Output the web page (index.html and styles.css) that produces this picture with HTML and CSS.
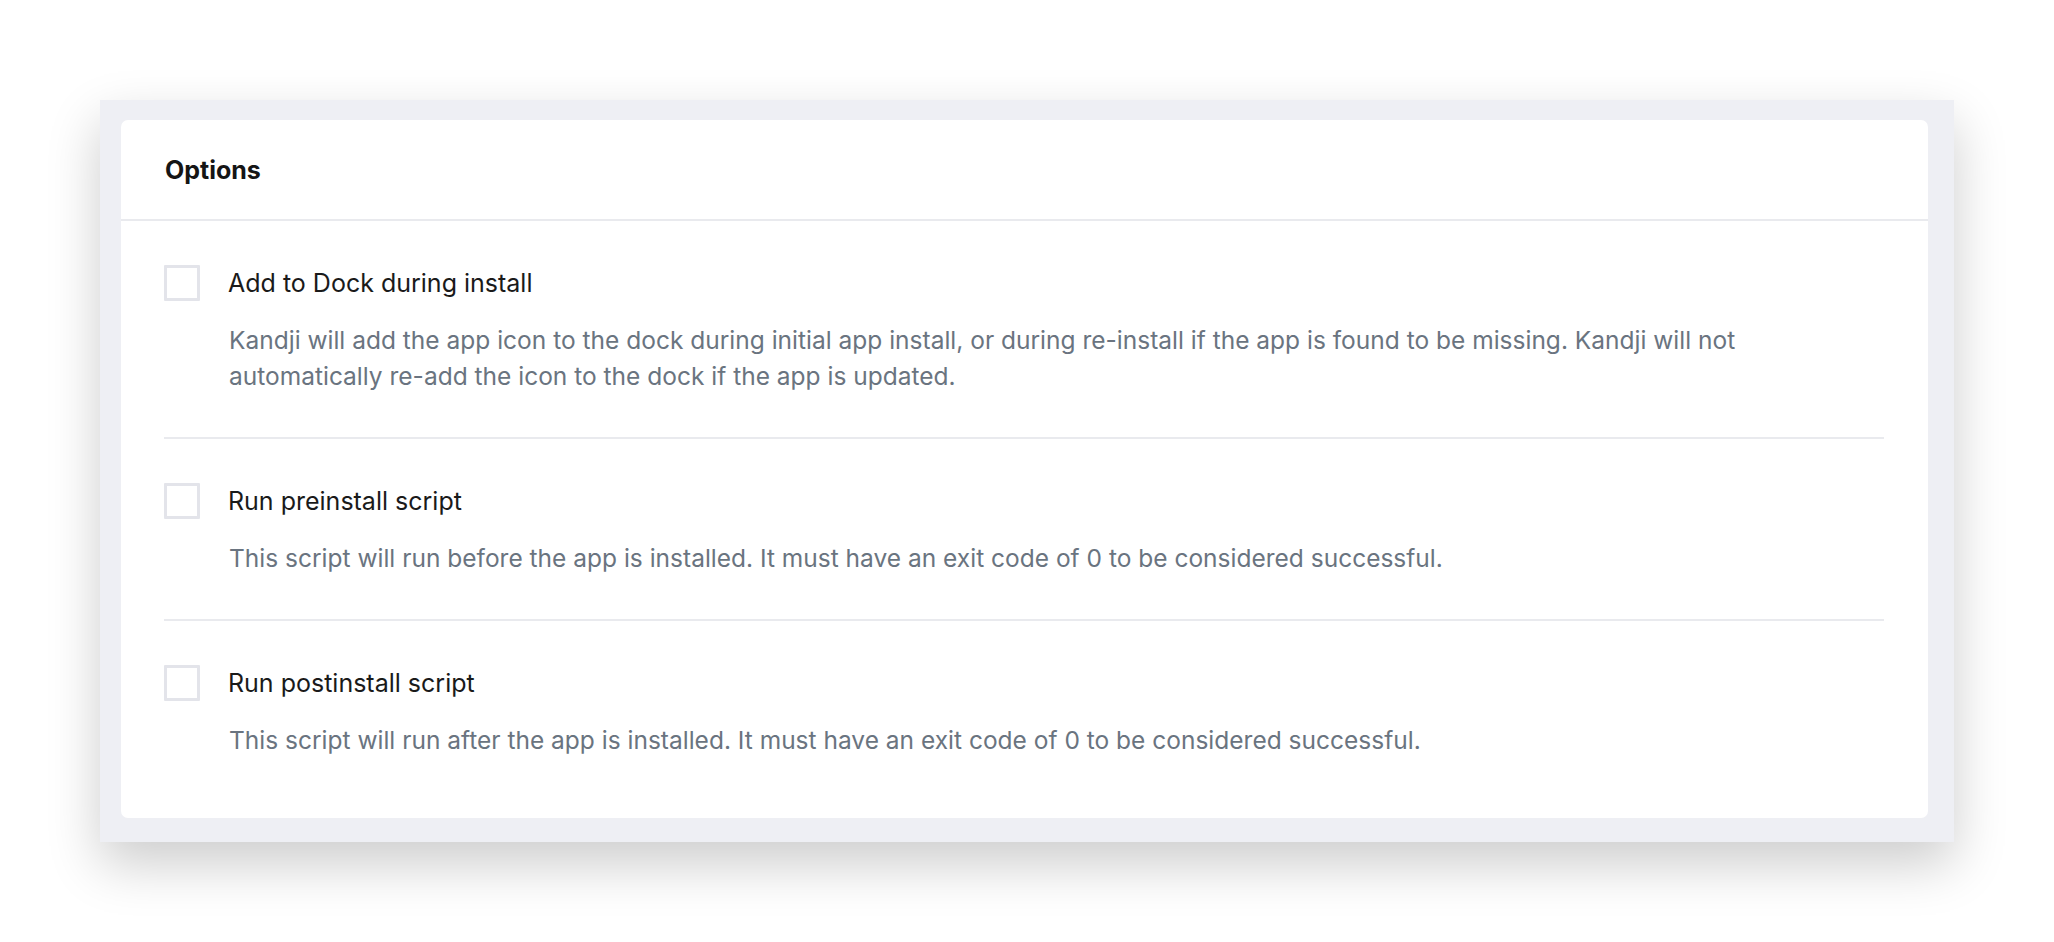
FILE: index.html
```html
<!DOCTYPE html>
<html lang="en">
<head>
<meta charset="utf-8">
<title>Options</title>
<link rel="stylesheet" href="styles.css">
</head>
<body>
  <div class="frame">
    <section class="card">
      <header class="card-header">
        <h2 class="card-title">Options</h2>
      </header>
      <div class="card-body">
        <div class="option">
          <div class="option-head">
            <span class="checkbox"></span>
            <span class="option-label">Add to Dock during install</span>
          </div>
          <p class="option-desc">Kandji will add the app icon to the dock during initial app install, or during re-install if the app is found to be missing. Kandji will not automatically re-add the icon to the dock if the app is updated.</p>
        </div>
        <div class="option">
          <div class="option-head">
            <span class="checkbox"></span>
            <span class="option-label">Run preinstall script</span>
          </div>
          <p class="option-desc">This script will run before the app is installed. It must have an exit code of 0 to be considered successful.</p>
        </div>
        <div class="option">
          <div class="option-head">
            <span class="checkbox"></span>
            <span class="option-label">Run postinstall script</span>
          </div>
          <p class="option-desc">This script will run after the app is installed. It must have an exit code of 0 to be considered successful.</p>
        </div>
      </div>
    </section>
  </div>
</body>
</html>
```
FILE: styles.css
```css
html, body {
  margin: 0;
  padding: 0;
  background: #ffffff;
}
body {
  font-family: Inter, "Noto Sans", "Liberation Sans", sans-serif;
  padding: 100px 100px 100px 100px;
}
.frame {
  width: 1854px;
  box-sizing: border-box;
  background: #eeeff4;
  padding: 20px 26px 24px 21px;
  box-shadow: 0 22px 50px rgba(0, 0, 0, 0.2);
}
.card {
  background: #ffffff;
  border-radius: 7px;
  padding-bottom: 17px;
}
.card-header {
  height: 101px;
  display: flex;
  align-items: center;
  padding: 0 44px 0 44px;
  box-sizing: border-box;
  border-bottom: 2px solid #e9eaee;
}
.card-title {
  margin: 0;
  font-size: 25px;
  font-weight: 700;
  color: #151515;
}
.card-body {
  padding: 0 44px 0 43px;
}
.option {
  padding: 44px 0 43px;
  border-bottom: 2px solid #e9eaee;
}
.option:last-child {
  border-bottom: none;
}
.option-head {
  display: flex;
  align-items: center;
  gap: 28px;
  height: 36px;
}
.checkbox {
  width: 36px;
  height: 36px;
  box-sizing: border-box;
  border: 3px solid #e3e4ea;
  border-radius: 1px;
  background: #ffffff;
  flex: none;
}
.option-label {
  font-size: 25px;
  line-height: 36px;
  color: #1a1a1a;
}
.option-desc {
  margin: 21px 0 0 65px;
  font-size: 24.5px;
  line-height: 36px;
  color: #6a7480;
}
```
